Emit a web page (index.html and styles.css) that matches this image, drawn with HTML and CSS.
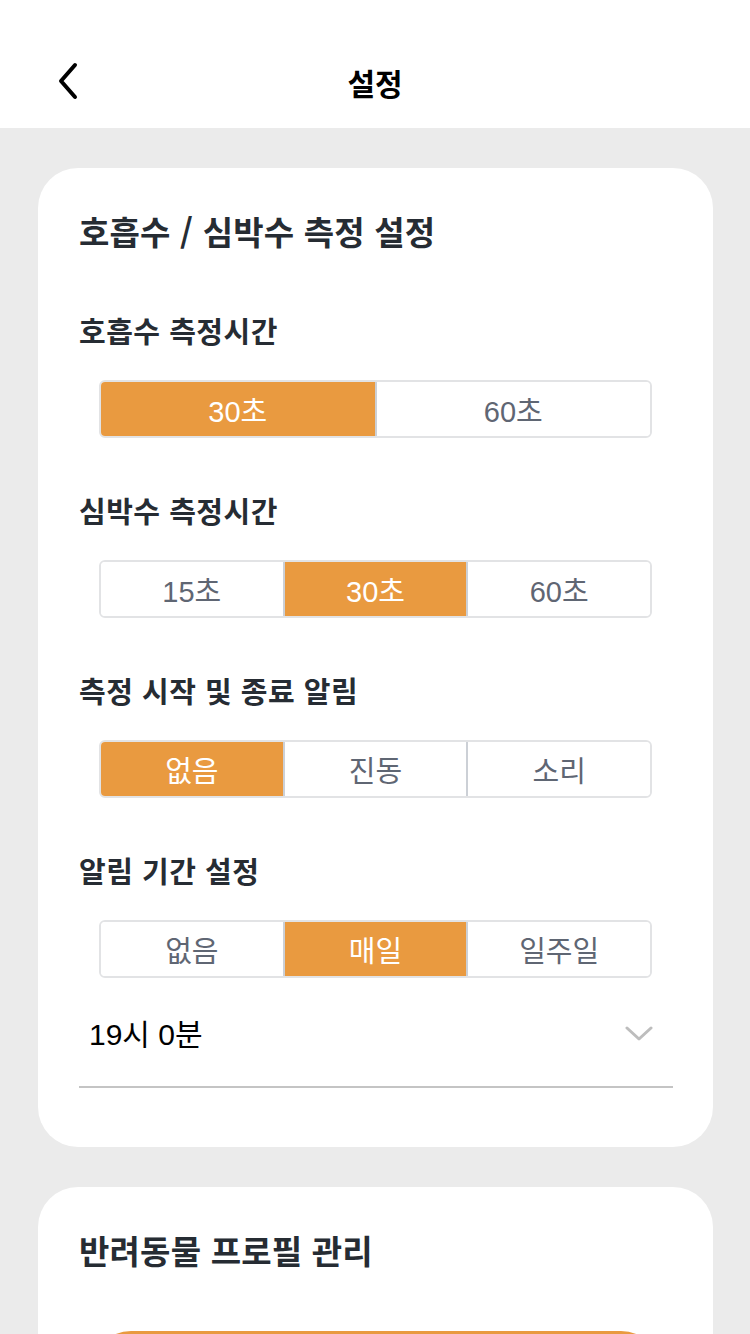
FILE: index.html
```html
<!DOCTYPE html>
<html lang="ko">
<head>
<meta charset="utf-8">
<title>설정</title>
<link rel="stylesheet" href="styles.css">
</head>
<body>
<header class="topbar">
  <button class="back" aria-label="뒤로">
    <svg width="26" height="38" viewBox="0 0 26 38"><path d="M20 3 L6 19 L20 35" fill="none" stroke="#000" stroke-width="4" stroke-linecap="round" stroke-linejoin="round"/></svg>
  </button>
  <h1 class="topbar-title">설정</h1>
</header>
<main class="content">
  <section class="card">
    <h2 class="card-title">호흡수 / 심박수 측정 설정</h2>

    <h3 class="label">호흡수 측정시간</h3>
    <div class="seg">
      <div class="seg-item on">30초</div>
      <div class="seg-item">60초</div>
    </div>

    <h3 class="label">심박수 측정시간</h3>
    <div class="seg">
      <div class="seg-item">15초</div>
      <div class="seg-item on">30초</div>
      <div class="seg-item">60초</div>
    </div>

    <h3 class="label">측정 시작 및 종료 알림</h3>
    <div class="seg">
      <div class="seg-item on">없음</div>
      <div class="seg-item">진동</div>
      <div class="seg-item">소리</div>
    </div>

    <h3 class="label">알림 기간 설정</h3>
    <div class="seg">
      <div class="seg-item">없음</div>
      <div class="seg-item on">매일</div>
      <div class="seg-item">일주일</div>
    </div>

    <div class="time-row">
      <span class="time-text">19시 0분</span>
      <svg class="chev" width="28" height="18" viewBox="0 0 28 18"><path d="M2 3 L14 14 L26 3" fill="none" stroke="#bdbdbd" stroke-width="3" stroke-linecap="round" stroke-linejoin="round"/></svg>
    </div>
  </section>

  <section class="card card2">
    <h2 class="card-title">반려동물 프로필 관리</h2>
    <div class="primary-btn"></div>
  </section>
</main>
</body>
</html>
```

FILE: styles.css
```css
* { box-sizing: border-box; }
html, body {
  margin: 0;
  padding: 0;
  background: #ebebeb;
  font-family: "Noto Sans CJK KR", "Noto Sans", sans-serif;
}
body {
  height: 1334px;
  overflow: hidden;
}
.topbar {
  height: 128px;
  background: #fff;
  display: flex;
  align-items: center;
  justify-content: center;
  position: relative;
}
.back {
  position: absolute;
  left: 55px;
  top: 62px;
  border: 0;
  background: none;
  padding: 0;
  width: 26px;
  height: 38px;
}
.back svg { display: block; }
.topbar-title {
  margin: 36px 0 0;
  font-size: 30px;
  font-weight: 700;
  color: #000;
  line-height: 40px;
}
.content {
  padding: 40px 37px 0 38px;
  display: flex;
  flex-direction: column;
  gap: 40px;
}
.card {
  background: #fff;
  border-radius: 40px;
  padding: 40px 40px 59px 41px;
}
.card-title {
  margin: 0;
  font-size: 33px;
  font-weight: 700;
  color: #262c33;
  line-height: 46px;
  letter-spacing: 0.2px;
}
.label {
  margin: 56px 0 0;
  font-size: 29px;
  font-weight: 700;
  color: #262c33;
  line-height: 40px;
  letter-spacing: 0.5px;
}
.seg + .label { margin-top: 52px; }
.seg {
  margin: 30px 21px 0 20px;
  height: 58px;
  display: flex;
  border: 2px solid #e2e3e5;
  border-radius: 6px;
  overflow: hidden;
}
.seg-item {
  flex: 1 1 0;
  display: flex;
  align-items: center;
  justify-content: center;
  font-family: "Liberation Sans", "Noto Sans CJK KR", sans-serif;
  font-size: 29px;
  color: #5f6673;
  background: #fff;
}
.seg-item + .seg-item { border-left: 2px solid #ccd0d6; }
.seg-item.on {
  background: #e99a40;
  color: #fff;
}
.time-row {
  margin-top: 36px;
  display: flex;
  align-items: center;
  justify-content: space-between;
  padding: 0 20px 30px 10px;
  border-bottom: 2px solid #c4c4c4;
  height: 74px;
}
.time-text {
  font-family: "Liberation Sans", "Noto Sans CJK KR", sans-serif;
  font-size: 30px;
  color: #000;
  line-height: 40px;
}
.chev { display: block; margin-top: -2px; }
.card2 {
  padding-bottom: 0;
  height: 200px;
  border-radius: 40px 40px 0 0;
}
.primary-btn {
  margin: 58px 12px 0 12px;
  height: 80px;
  background: #e99a40;
  border-radius: 40px;
}
```
